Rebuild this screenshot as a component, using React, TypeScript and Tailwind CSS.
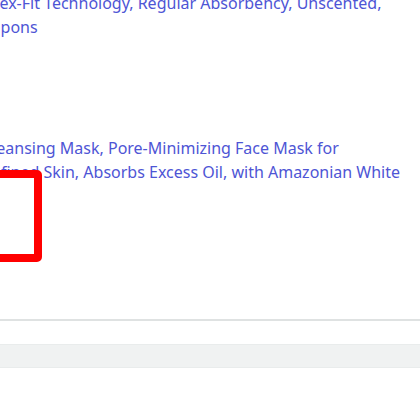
import React from 'react';

const linkText = 'text-[16px] leading-[24px] text-[#4e55d5] whitespace-nowrap';

function TitleBlock({ lines }: { lines: { text: string; shift: string }[] }) {
  return (
    <div className="flex flex-col">
      {lines.map((l, i) => (
        <div key={i} className={`${linkText} ${l.shift}`}>
          {l.text}
        </div>
      ))}
    </div>
  );
}

export default function App() {
  return (
    <div
      className="relative w-[420px] h-[420px] overflow-hidden bg-white"
      style={{ fontFamily: '"Noto Sans", "Open Sans", sans-serif' }}
    >
      <div className="mt-[-9px]">
        <TitleBlock
          lines={[
            { text: 'Flex-Fit Technology, Regular Absorbency, Unscented,', shift: 'ml-[-13px]' },
            { text: 'Tampons', shift: 'ml-[-31px]' },
          ]}
        />
      </div>

      <div className="mt-[97px]">
        <TitleBlock
          lines={[
            { text: 'Cleansing Mask, Pore-Minimizing Face Mask for', shift: 'ml-[-18px]' },
            { text: 'Refined Skin, Absorbs Excess Oil, with Amazonian White', shift: 'ml-[-18px]' },
          ]}
        />
      </div>

      <div className="mt-[135px] h-[2px] bg-[#dfe2e2]" />
      <div className="mt-[23px] h-[24px] bg-[#f0f2f2] border-y border-[#e9ecec]" />

      {/* annotation box */}
      <div className="absolute left-[-60px] top-[170px] w-[102px] h-[92px] border-[8px] border-[#ff0000] rounded-[5px]" />
    </div>
  );
}
